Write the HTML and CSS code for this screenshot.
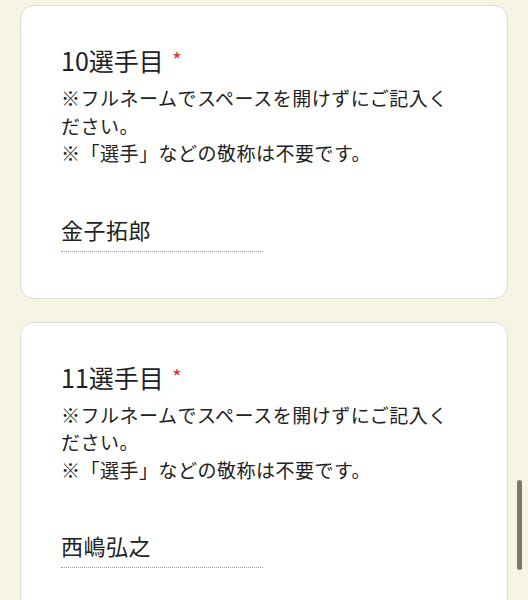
FILE: index.html
```html
<!DOCTYPE html>
<html>
  <head>
    <meta name="viewport" content="width=device-width, initial-scale=1" />
    <link rel="stylesheet" href="styles.css">
  </head>
  <body>
    <div class="page">
      <div class="card">
        <div class="title">10選手目 <span class="req">*</span></div>
        <div class="desc">※フルネームでスペースを開けずにご記入ください。<br />※「選手」などの敬称は不要です。</div>
        <div class="answer">金子拓郎</div>
      </div>
      <div class="card">
        <div class="title">11選手目 <span class="req">*</span></div>
        <div class="desc">※フルネームでスペースを開けずにご記入ください。<br />※「選手」などの敬称は不要です。</div>
        <div class="answer">西嶋弘之</div>
      </div>
    </div>
    <div class="scrollbar"></div>
  </body>
</html>
```

FILE: styles.css
```css
* {
  box-sizing: border-box;
}

body {
  margin: 0;
  background-color: #f6f4e3;
  font-family: "Noto Sans CJK JP", "Liberation Sans", sans-serif;
  color: #202124;
  overflow: hidden;
}

/* column of question cards */
.page {
  display: flex;
  flex-direction: column;
  gap: 23px;
  padding: 5px 20px 0 20px;
}

.card {
  background-color: white;
  border: 1px solid #dadce0;
  border-radius: 14px;
  padding: 39px 40px 46px 40px;
}

.title {
  font-size: 25px;
  line-height: 30px;
}

.req {
  color: #d93025;
  font-size: 20px;
  margin-left: 3px;
  vertical-align: top;
}

.desc {
  margin-top: 9px;
  font-size: 19px;
  line-height: 27.5px;
  letter-spacing: 0.5px;
  width: 400px;
}

/* answer text with dotted underline */
.answer {
  margin-top: 47px;
  width: 202px;
  font-size: 22px;
  line-height: 30px;
  letter-spacing: 0.5px;
  padding-bottom: 7px;
  border-bottom: 1px dotted #9aa0a6;
}

/* overlay scroll indicator */
.scrollbar {
  position: fixed;
  left: 517px;
  top: 480px;
  width: 5px;
  height: 90px;
  border-radius: 3px;
  background-color: #7b786f;
}
```
